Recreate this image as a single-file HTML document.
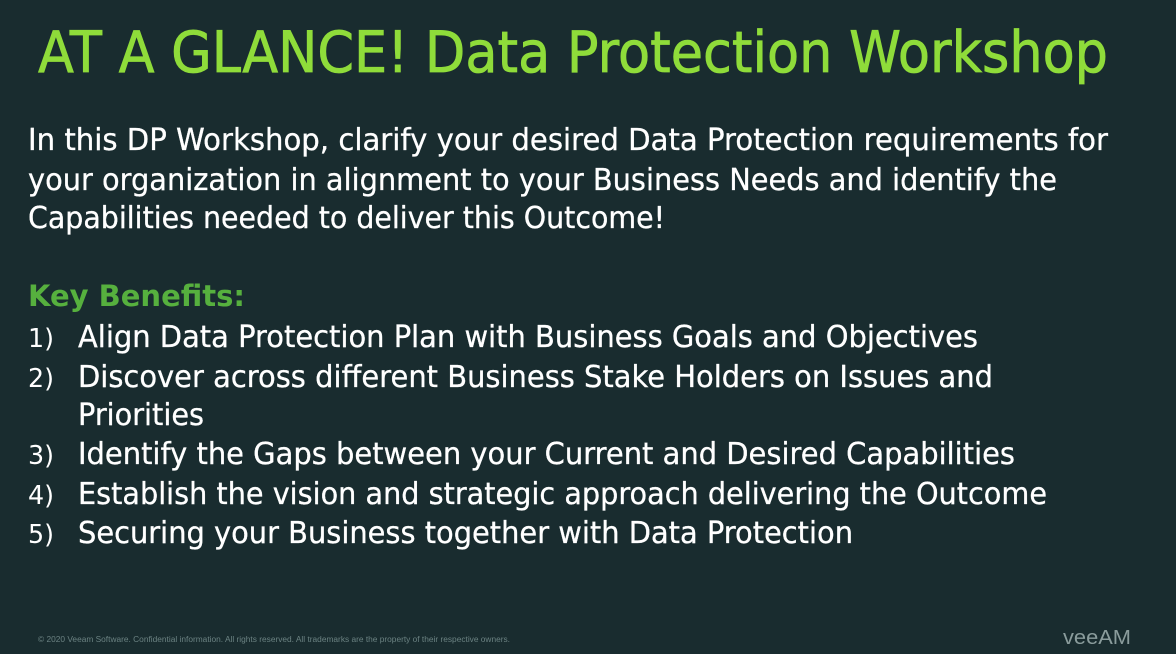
<!DOCTYPE html>
<html><head><meta charset="utf-8"><style>
html,body{margin:0;padding:0;background:#192c2f;}
svg{display:block}
</style></head><body>
<svg width="1176" height="654" viewBox="0 0 1176 654" xmlns="http://www.w3.org/2000/svg" font-family="'DejaVu Sans','Liberation Sans',sans-serif">
<rect width="1176" height="654" fill="#192c2f"/>
<text x="38" y="72" font-size="57" fill="#8fdc3a" stroke="#8fdc3a" stroke-width="0.8" textLength="1070" lengthAdjust="spacingAndGlyphs">AT A GLANCE! Data Protection Workshop</text>
<g fill="#ffffff" font-size="30" stroke="#ffffff" stroke-width="0.3">
<text x="28" y="150" textLength="1080" lengthAdjust="spacingAndGlyphs">In this DP Workshop, clarify your desired Data Protection requirements for</text>
<text x="28" y="190" textLength="1029" lengthAdjust="spacingAndGlyphs">your organization in alignment to your Business Needs and identify the</text>
<text x="28" y="228" textLength="637" lengthAdjust="spacingAndGlyphs">Capabilities needed to deliver this Outcome!</text>
</g>
<text x="28" y="306" font-size="29" font-weight="bold" fill="#56b03e" textLength="217" lengthAdjust="spacingAndGlyphs">Key Benefits:</text>
<g fill="#ffffff" font-size="26">
<text x="28" y="347" textLength="26" lengthAdjust="spacingAndGlyphs">1)</text>
<text x="28" y="387" textLength="26" lengthAdjust="spacingAndGlyphs">2)</text>
<text x="28" y="464" textLength="26" lengthAdjust="spacingAndGlyphs">3)</text>
<text x="28" y="504" textLength="26" lengthAdjust="spacingAndGlyphs">4)</text>
<text x="28" y="543" textLength="26" lengthAdjust="spacingAndGlyphs">5)</text>
</g>
<g fill="#ffffff" font-size="30" stroke="#ffffff" stroke-width="0.3">
<text x="78" y="347" textLength="900" lengthAdjust="spacingAndGlyphs">Align Data Protection Plan with Business Goals and Objectives</text>
<text x="78" y="387" textLength="915" lengthAdjust="spacingAndGlyphs">Discover across different Business Stake Holders on Issues and</text>
<text x="78" y="425" textLength="126" lengthAdjust="spacingAndGlyphs">Priorities</text>
<text x="78" y="464" textLength="937" lengthAdjust="spacingAndGlyphs">Identify the Gaps between your Current and Desired Capabilities</text>
<text x="78" y="504" textLength="969" lengthAdjust="spacingAndGlyphs">Establish the vision and strategic approach delivering the Outcome</text>
<text x="78" y="543" textLength="775" lengthAdjust="spacingAndGlyphs">Securing your Business together with Data Protection</text>
</g>
<text x="38" y="642" font-size="8" fill="#6b8282" font-family="'Liberation Sans',sans-serif" textLength="472" lengthAdjust="spacingAndGlyphs">© 2020 Veeam Software. Confidential information. All rights reserved. All trademarks are the property of their respective owners.</text>
<text x="1063" y="644" font-size="20" fill="#8a9c9c" font-family="'Liberation Sans',sans-serif" textLength="68" lengthAdjust="spacingAndGlyphs">veeAM</text>
</svg>
</body></html>
